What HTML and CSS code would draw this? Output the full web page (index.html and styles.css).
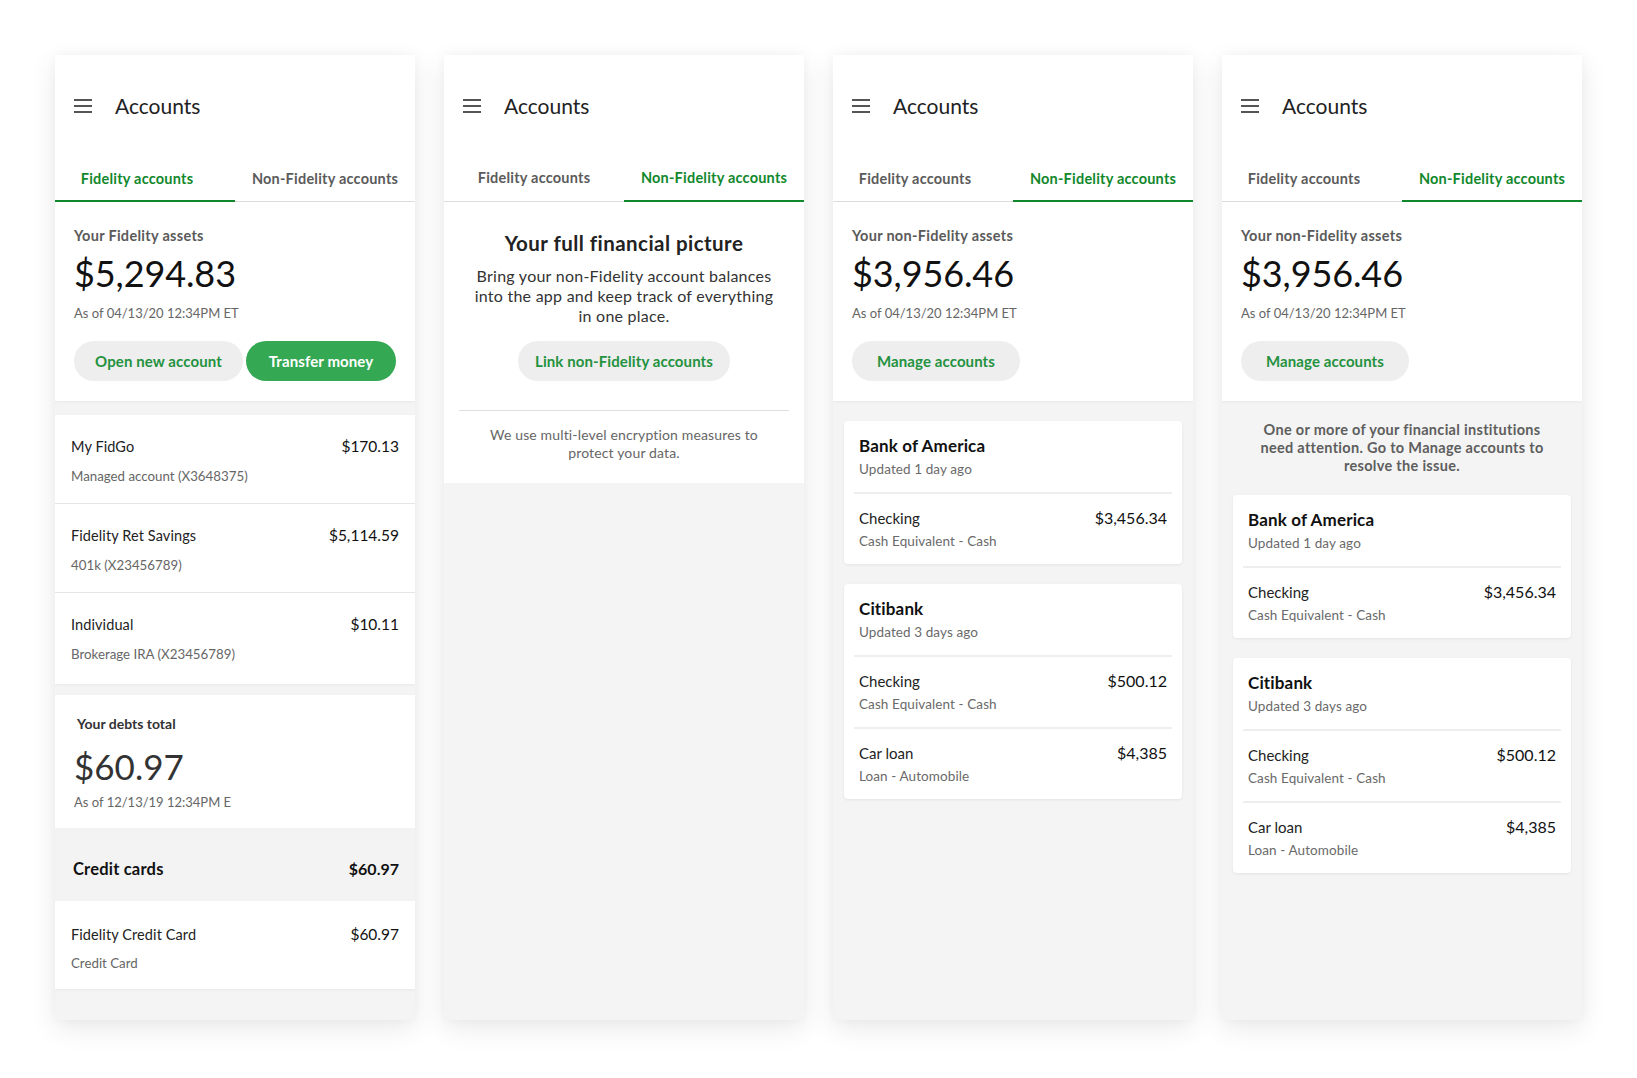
FILE: index.html
```html
<!DOCTYPE html>
<html lang="en">
<head>
<meta charset="utf-8">
<title>Accounts</title>
<link rel="stylesheet" href="styles.css">
</head>
<body>
<div class="board">

  <!-- Panel 1 -->
  <section class="phone">
    <header class="appbar">
      <svg class="menu" width="18" height="14" viewBox="0 0 18 14"><rect y="0" width="18" height="2"/><rect y="6" width="18" height="2"/><rect y="12" width="18" height="2"/></svg>
      <h1 class="title">Accounts</h1>
    </header>
    <nav class="tabs">
      <div class="tab tab-active tab-shift">Fidelity accounts</div>
      <div class="tab">Non-Fidelity accounts</div>
    </nav>
    <div class="assets">
      <div class="assets-label">Your Fidelity assets</div>
      <div class="assets-amount">$5,294.83</div>
      <div class="assets-date">As of 04/13/20 12:34PM ET</div>
      <div class="btn-row">
        <button class="btn btn-light btn-open">Open new account</button>
        <button class="btn btn-green btn-transfer">Transfer money</button>
      </div>
    </div>
    <div class="list">
      <div class="row">
        <div class="row-top"><span class="row-label">My FidGo</span><span class="row-amount">$170.13</span></div>
        <div class="row-sub">Managed account (X3648375)</div>
      </div>
      <div class="row">
        <div class="row-top"><span class="row-label">Fidelity Ret Savings</span><span class="row-amount">$5,114.59</span></div>
        <div class="row-sub">401k (X23456789)</div>
      </div>
      <div class="row">
        <div class="row-top"><span class="row-label">Individual</span><span class="row-amount">$10.11</span></div>
        <div class="row-sub">Brokerage IRA (X23456789)</div>
      </div>
    </div>
    <div class="debts">
      <div class="debts-summary">
        <div class="debts-label">Your debts total</div>
        <div class="debts-amount">$60.97</div>
        <div class="debts-date">As of 12/13/19 12:34PM E</div>
      </div>
      <div class="debts-head"><span>Credit cards</span><span class="debts-head-amount">$60.97</span></div>
      <div class="row row-credit">
        <div class="row-top"><span class="row-label">Fidelity Credit Card</span><span class="row-amount">$60.97</span></div>
        <div class="row-sub">Credit Card</div>
      </div>
    </div>
  </section>

  <!-- Panel 2 -->
  <section class="phone">
    <header class="appbar appbar-up">
      <svg class="menu" width="18" height="14" viewBox="0 0 18 14"><rect y="0" width="18" height="2"/><rect y="6" width="18" height="2"/><rect y="12" width="18" height="2"/></svg>
      <h1 class="title">Accounts</h1>
    </header>
    <nav class="tabs">
      <div class="tab">Fidelity accounts</div>
      <div class="tab tab-active">Non-Fidelity accounts</div>
    </nav>
    <div class="intro">
      <h2 class="intro-title">Your full financial picture</h2>
      <p class="intro-text">Bring your non-Fidelity account balances<br>into the app and keep track of everything<br>in one place.</p>
      <button class="btn btn-light btn-link">Link non-Fidelity accounts</button>
      <div class="intro-divider"></div>
      <p class="intro-note">We use multi-level encryption measures to<br>protect your data.</p>
    </div>
  </section>

  <!-- Panel 3 -->
  <section class="phone">
    <header class="appbar">
      <svg class="menu" width="18" height="14" viewBox="0 0 18 14"><rect y="0" width="18" height="2"/><rect y="6" width="18" height="2"/><rect y="12" width="18" height="2"/></svg>
      <h1 class="title">Accounts</h1>
    </header>
    <nav class="tabs">
      <div class="tab tab-shift">Fidelity accounts</div>
      <div class="tab tab-active">Non-Fidelity accounts</div>
    </nav>
    <div class="assets">
      <div class="assets-label">Your non-Fidelity assets</div>
      <div class="assets-amount">$3,956.46</div>
      <div class="assets-date">As of 04/13/20 12:34PM ET</div>
      <div class="btn-row">
        <button class="btn btn-light btn-manage">Manage accounts</button>
      </div>
    </div>
    <div class="banks">
      <div class="bank">
        <div class="bank-head">
          <div class="bank-name">Bank of America</div>
          <div class="bank-sub">Updated 1 day ago</div>
        </div>
        <div class="bank-sep"></div>
        <div class="bank-row">
          <div class="row-top"><span class="bank-label">Checking</span><span class="bank-amount">$3,456.34</span></div>
          <div class="bank-sub">Cash Equivalent - Cash</div>
        </div>
      </div>
      <div class="bank">
        <div class="bank-head">
          <div class="bank-name">Citibank</div>
          <div class="bank-sub">Updated 3 days ago</div>
        </div>
        <div class="bank-sep"></div>
        <div class="bank-row">
          <div class="row-top"><span class="bank-label">Checking</span><span class="bank-amount">$500.12</span></div>
          <div class="bank-sub">Cash Equivalent - Cash</div>
        </div>
        <div class="bank-sep"></div>
        <div class="bank-row">
          <div class="row-top"><span class="bank-label">Car loan</span><span class="bank-amount">$4,385</span></div>
          <div class="bank-sub">Loan - Automobile</div>
        </div>
      </div>
    </div>
  </section>

  <!-- Panel 4 -->
  <section class="phone">
    <header class="appbar">
      <svg class="menu" width="18" height="14" viewBox="0 0 18 14"><rect y="0" width="18" height="2"/><rect y="6" width="18" height="2"/><rect y="12" width="18" height="2"/></svg>
      <h1 class="title">Accounts</h1>
    </header>
    <nav class="tabs">
      <div class="tab tab-shift">Fidelity accounts</div>
      <div class="tab tab-active">Non-Fidelity accounts</div>
    </nav>
    <div class="assets">
      <div class="assets-label">Your non-Fidelity assets</div>
      <div class="assets-amount">$3,956.46</div>
      <div class="assets-date">As of 04/13/20 12:34PM ET</div>
      <div class="btn-row">
        <button class="btn btn-light btn-manage">Manage accounts</button>
      </div>
    </div>
    <p class="warning">One or more of your financial institutions<br>need attention. Go to Manage accounts to<br>resolve the issue.</p>
    <div class="banks banks-tight">
      <div class="bank">
        <div class="bank-head">
          <div class="bank-name">Bank of America</div>
          <div class="bank-sub">Updated 1 day ago</div>
        </div>
        <div class="bank-sep"></div>
        <div class="bank-row">
          <div class="row-top"><span class="bank-label">Checking</span><span class="bank-amount">$3,456.34</span></div>
          <div class="bank-sub">Cash Equivalent - Cash</div>
        </div>
      </div>
      <div class="bank">
        <div class="bank-head">
          <div class="bank-name">Citibank</div>
          <div class="bank-sub">Updated 3 days ago</div>
        </div>
        <div class="bank-sep"></div>
        <div class="bank-row">
          <div class="row-top"><span class="bank-label">Checking</span><span class="bank-amount">$500.12</span></div>
          <div class="bank-sub">Cash Equivalent - Cash</div>
        </div>
        <div class="bank-sep"></div>
        <div class="bank-row">
          <div class="row-top"><span class="bank-label">Car loan</span><span class="bank-amount">$4,385</span></div>
          <div class="bank-sub">Loan - Automobile</div>
        </div>
      </div>
    </div>
  </section>

</div>
</body>
</html>
```

FILE: styles.css
```css
* { box-sizing: border-box; }

html, body {
  margin: 0;
  padding: 0;
  background: #ffffff;
}

body {
  font-family: "Lato", "Noto Sans", "Liberation Sans", sans-serif;
  color: #222;
  width: 1637px;
  height: 1078px;
  overflow: hidden;
}

.board {
  display: flex;
  gap: 29px;
  padding: 55px;
}

.phone {
  width: 360px;
  height: 965px;
  flex: 0 0 360px;
  background: #f4f4f4;
  box-shadow: 0 8px 26px rgba(0, 0, 0, 0.09), 0 0 10px rgba(0, 0, 0, 0.03);
  display: flex;
  flex-direction: column;
  overflow: hidden;
}

/* App bar */
.appbar {
  height: 102px;
  background: #fff;
  display: flex;
  align-items: center;
  padding-left: 19px;
}
.appbar-up { height: 101px; }

.menu { fill: #555; flex: 0 0 auto; }

.title {
  margin: 0 0 0 23px;
  font-size: 21px;
  font-weight: 400;
  color: #222;
  line-height: 24px;
}

/* Tabs */
.tabs {
  display: flex;
  background: #fff;
}
.appbar-up + .tabs .tab { height: 46px; }

.tab {
  flex: none;
  width: 50%;
  height: 45px;
  padding-top: 13px;
  text-align: center;
  font-size: 14.5px;
  line-height: 17px;
  font-weight: 700;
  letter-spacing: 0.22px;
  color: #5b5b5b;
  border-bottom: 1px solid #dddddd;
  white-space: nowrap;
}
.tab-active {
  color: #12882c;
  border-bottom: 2px solid #12882c;
}
.tab-shift { padding-right: 16px; }

/* Assets card */
.assets {
  background: #fff;
  padding: 25px 19px 20px;
  box-shadow: 0 1px 3px rgba(0, 0, 0, 0.05);
  position: relative;
  z-index: 1;
}
.assets-label {
  font-size: 14.5px;
  line-height: 17px;
  font-weight: 700;
  letter-spacing: 0.3px;
  color: #5a5a5a;
}
.assets-amount {
  margin-top: 7px;
  font-size: 36px;
  line-height: 44px;
  color: #111;
  letter-spacing: -0.1px;
}
.assets-date {
  margin-top: 10px;
  font-size: 13px;
  line-height: 16px;
  color: #666;
}

.btn-row {
  display: flex;
  gap: 3px;
  margin-top: 20px;
}
.btn {
  height: 40px;
  border: none;
  border-radius: 20px;
  font-family: inherit;
  font-size: 15px;
  font-weight: 700;
  letter-spacing: 0.1px;
  padding: 0;
  cursor: pointer;
}
.btn-light { background: #eeeeee; color: #24923f; }
.btn-green { background: #34a853; color: #fff; }
.btn-open { width: 169px; }
.btn-transfer { width: 150px; }
.btn-manage { width: 168px; }
.btn-link { width: 212px; }

/* Account list */
.list {
  margin-top: 14px;
  background: #fff;
  box-shadow: 0 1px 3px rgba(0, 0, 0, 0.05);
}
.row {
  height: 89px;
  padding: 21px 16px 0 16px;
  border-bottom: 1px solid #e6e6e6;
}
.row:last-child { border-bottom: none; height: 91px; }
.row-top {
  display: flex;
  justify-content: space-between;
  align-items: baseline;
}
.row-label {
  font-size: 14.5px;
  line-height: 20px;
  letter-spacing: 0.1px;
  color: #222;
}
.row-amount {
  font-size: 15.5px;
  line-height: 20px;
  color: #111;
}
.row-sub {
  margin-top: 9px;
  font-size: 13.3px;
  line-height: 20px;
  color: #666;
}

/* Debts */
.debts {
  margin-top: 11px;
  background: #fff;
  box-shadow: 0 1px 3px rgba(0, 0, 0, 0.05);
}
.debts-summary {
  height: 133px;
  padding: 20px 19px 0;
}
.debts-label {
  padding-left: 3px;
  font-size: 14px;
  line-height: 17px;
  font-weight: 700;
  color: #333;
}
.debts-amount {
  margin-top: 14px;
  font-size: 35px;
  line-height: 40px;
  color: #333;
}
.debts-date {
  margin-top: 8px;
  white-space: nowrap;
  font-size: 13px;
  line-height: 16px;
  color: #666;
}
.debts-head {
  height: 73px;
  background: #f3f3f3;
  display: flex;
  justify-content: space-between;
  align-items: flex-start;
  padding: 31px 16px 0 18px;
  font-size: 16.5px;
  line-height: 20px;
  font-weight: 700;
  letter-spacing: 0.2px;
  color: #111;
}
.debts-head-amount { font-size: 16px; letter-spacing: 0; }
.row-credit {
  height: 88px;
  padding-top: 23px;
}
.row-credit .row-sub { margin-top: 8px; }
.row.row-credit:last-child { height: 88px; }

/* Intro (panel 2) */
.intro {
  background: #fff;
  padding: 29px 15px 21px;
  text-align: center;
}
.intro-title {
  margin: 0;
  font-size: 20.5px;
  line-height: 24px;
  font-weight: 700;
  letter-spacing: 0.45px;
  color: #222;
}
.intro-text {
  margin: 11px 0 0;
  font-size: 16px;
  line-height: 20px;
  letter-spacing: 0.25px;
  color: #333;
}
.intro .btn { margin-top: 15px; }
.intro-divider {
  margin-top: 29px;
  height: 1px;
  background: #dddddd;
}
.intro-note {
  margin: 15px 0 0;
  font-size: 14px;
  line-height: 18px;
  letter-spacing: 0.15px;
  color: #666;
}

/* Bank cards */
.banks {
  padding: 20px 11px 0;
  display: flex;
  flex-direction: column;
  gap: 20px;
}
.banks-tight { padding-top: 20px; }
.bank {
  background: #fff;
  border-radius: 4px;
  box-shadow: 0 1px 3px rgba(0, 0, 0, 0.07);
}
.bank-head {
  padding: 15px 15px 13px;
}
.bank-name {
  font-size: 17px;
  line-height: 20px;
  font-weight: 700;
  letter-spacing: 0.15px;
  color: #111;
}
.bank-head .bank-sub { margin-top: 3px; }
.bank-sub {
  font-size: 13.5px;
  line-height: 20px;
  letter-spacing: 0.1px;
  color: #6a6a6a;
}
.bank-sep {
  margin: 0 10px;
  height: 2px;
  background: #eeeeee;
}
.bank-row {
  padding: 14px 15px 13px;
}
.bank-row .bank-sub { margin-top: 3px; }
.bank-label {
  font-size: 15px;
  line-height: 20px;
  color: #222;
}
.bank-amount {
  font-size: 16px;
  line-height: 20px;
  color: #111;
}

/* Warning (panel 4) */
.warning {
  margin: 0;
  padding: 20px 10px 0;
  text-align: center;
  font-size: 14.5px;
  line-height: 18px;
  font-weight: 700;
  letter-spacing: 0.3px;
  color: #5e5e5e;
}
```
